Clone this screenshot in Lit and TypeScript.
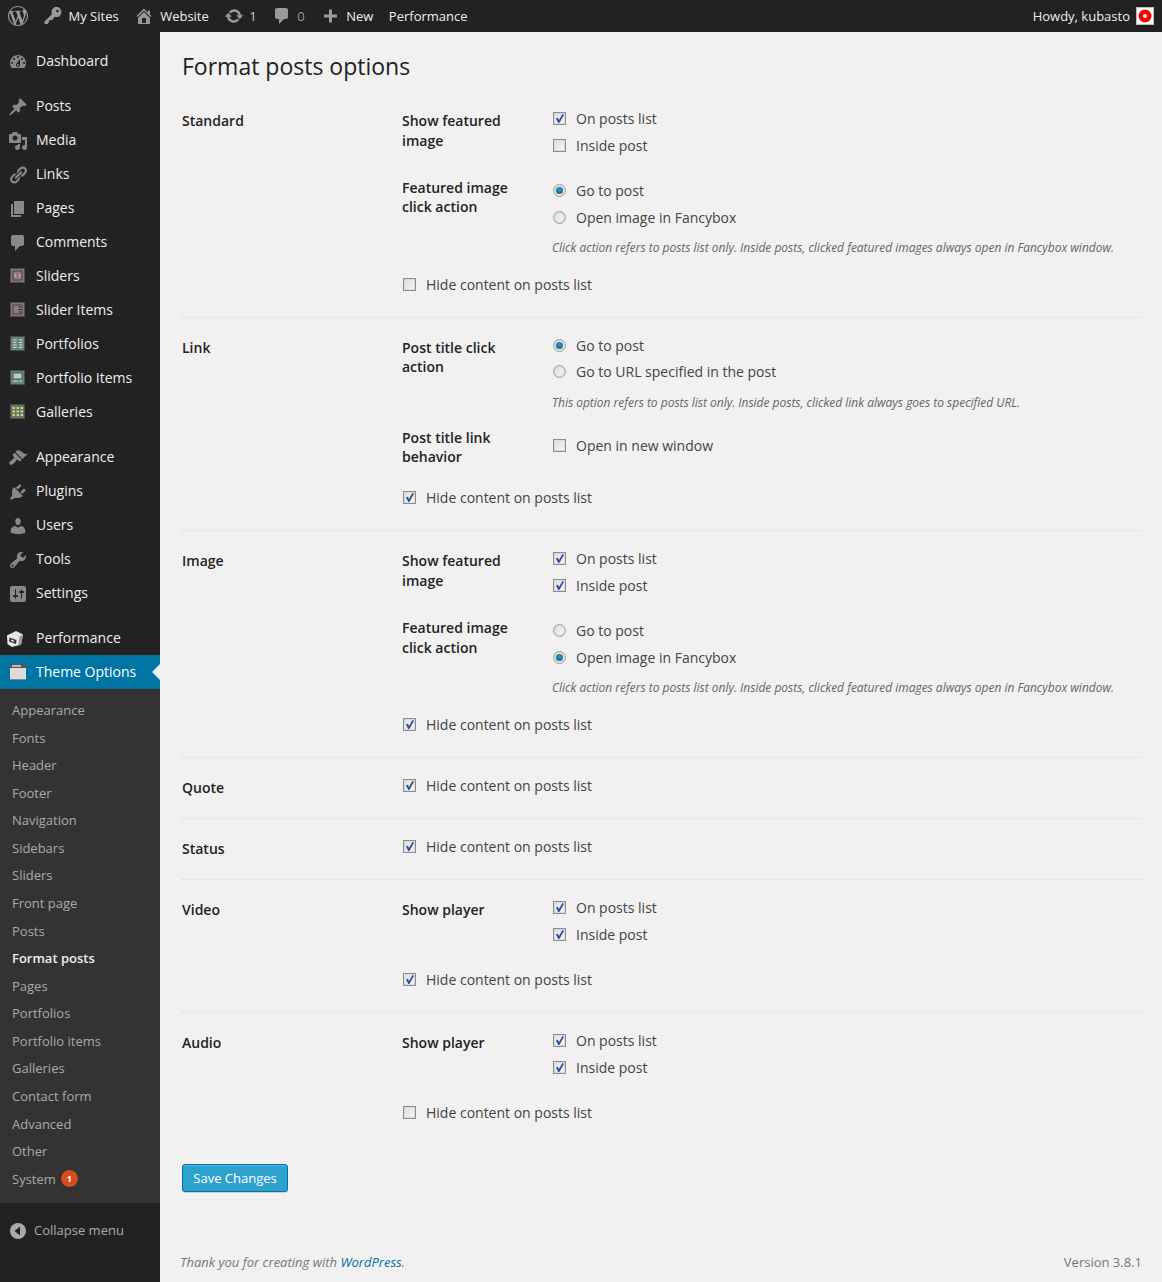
import { LitElement, html, css, svg } from "lit";
import { customElement } from "lit/decorators.js";

const P = {
  wp: "M20 10c0-5.51-4.49-10-10-10C4.48 0 0 4.49 0 10c0 5.52 4.48 10 10 10 5.51 0 10-4.48 10-10zM7.78 15.37L4.37 6.22c.55-.02 1.17-.08 1.17-.08.5-.06.44-1.13-.06-1.11 0 0-1.45.11-2.37.11-.18 0-.37 0-.58-.01C4.12 2.69 6.87 1.11 10 1.11c2.33 0 4.45.87 6.05 2.34-.68-.11-1.65.39-1.65 1.58 0 .74.45 1.36.9 2.1.35.61.55 1.36.55 2.46 0 1.49-1.4 5-1.4 5l-3.03-8.37c.54-.02.82-.17.82-.17.5-.05.44-1.25-.06-1.22 0 0-1.44.12-2.38.12-.87 0-2.33-.12-2.33-.12-.5-.03-.56 1.2-.06 1.22l.92.08 1.26 3.41zM17.41 10c.24-.64.74-1.87.43-4.25.7 1.29 1.05 2.71 1.05 4.25 0 3.29-1.73 6.24-4.4 7.78.97-2.59 1.94-5.2 2.92-7.78zM6.1 18.09C3.12 16.65 1.11 13.53 1.11 10c0-1.3.23-2.48.72-3.59C3.25 10.3 4.67 14.2 6.1 18.09zm4.03-6.63l2.58 6.98c-.86.29-1.76.45-2.71.45-.79 0-1.57-.11-2.29-.33.81-2.38 1.62-4.74 2.42-7.1z",
  key: "M16.95 2.58c1.96 1.95 1.96 5.12 0 7.07-1.51 1.51-3.75 1.84-5.59 1.01l-1.87 3.31-2.99.31L5 18H2l-1-2 7.95-7.69c-.92-1.87-.62-4.18.93-5.73 1.95-1.96 5.12-1.96 7.07 0zm-2.51 3.79c.74 0 1.33-.6 1.33-1.34 0-.73-.59-1.33-1.33-1.33-.73 0-1.33.6-1.33 1.33 0 .74.6 1.34 1.33 1.34z",
  home: "M16 8.5l1.53 1.53-1.06 1.06L10 4.62l-6.47 6.47-1.06-1.06L10 2.5l4 4v-2h2v4zm-6-2.46l6 5.99V18H4v-5.97zM12 17v-5H8v5h4z",
  updates: "M10.2 3.28c3.53 0 6.43 2.61 6.92 6h2.08l-3.5 4-3.5-4h2.32c-.45-1.97-2.21-3.44-4.32-3.44-1.45 0-2.73.71-3.54 1.78L4.95 5.66C6.23 4.2 8.11 3.28 10.2 3.28zm-.4 13.44c-3.52 0-6.43-2.61-6.92-6H.8l3.5-4c1.17 1.33 2.33 2.67 3.5 4H5.48c.45 1.97 2.21 3.44 4.32 3.44 1.45 0 2.73-.71 3.54-1.78l1.71 1.95c-1.28 1.46-3.15 2.39-5.25 2.39z",
  comment: "M5 2h9c1.1 0 2 .9 2 2v7c0 1.1-.9 2-2 2h-2l-5 5v-5H5c-1.1 0-2-.9-2-2V4c0-1.1.9-2 2-2z",
  plus: "M17 8.500v3h-5v5H9v-5H4v-3h5v-5h3v5h5z",
  dashboard: "M3.76 16h12.48c1.1-1.37 1.76-3.11 1.76-5 0-4.42-3.58-8-8-8s-8 3.58-8 8c0 1.89.66 3.63 1.76 5zM10 4c.55 0 1 .45 1 1s-.45 1-1 1-1-.45-1-1 .45-1 1-1zM6 6c.55 0 1 .45 1 1s-.45 1-1 1-1-.45-1-1 .45-1 1-1zm8 0c.55 0 1 .45 1 1s-.45 1-1 1-1-.45-1-1 .45-1 1-1zm-5.37 5.55L12 7v6c0 1.1-.9 2-2 2s-2-.9-2-2c0-.57.24-1.08.63-1.45zM4 10c.55 0 1 .45 1 1s-.45 1-1 1-1-.45-1-1 .45-1 1-1zm12 0c.55 0 1 .45 1 1s-.45 1-1 1-1-.45-1-1 .45-1 1-1zm-5 3c0-.55-.45-1-1-1s-1 .45-1 1 .45 1 1 1 1-.45 1-1z",
  post: "M10.44 3.02l1.82-1.82 6.36 6.35-1.83 1.82c-1.05-.68-2.48-.57-3.41.36l-.75.75c-.92.93-1.04 2.35-.35 3.41l-1.83 1.82-2.41-2.41-2.8 2.79c-.42.42-3.38 2.71-3.8 2.29s1.86-3.39 2.28-3.81l2.79-2.79L4.1 9.36l1.83-1.82c1.05.69 2.48.57 3.4-.36l.75-.75c.93-.92 1.05-2.35.36-3.41z",
  media: "M13 11V4c0-.55-.45-1-1-1h-1.67L9 1H5L3.67 3H2c-.55 0-1 .45-1 1v7c0 .55.45 1 1 1h10c.55 0 1-.45 1-1zM7 4.5c1.38 0 2.5 1.12 2.5 2.5S8.38 9.5 7 9.5 4.5 8.38 4.5 7 5.62 4.5 7 4.5zM14 6h5v10.5c0 1.38-1.12 2.5-2.5 2.5S14 17.88 14 16.5s1.12-2.5 2.5-2.5c.17 0 .34.02.5.05V9h-3V6zm-4 8.05V13h2v3.5c0 1.38-1.12 2.5-2.5 2.5S7 17.88 7 16.5 8.12 14 9.5 14c.17 0 .34.02.5.05z",
  links: "M17.74 2.76c1.68 1.69 1.68 4.41 0 6.1l-1.53 1.52c-1.12 1.12-2.7 1.49-4.14 1.09l2.62-2.61.76-.77.76-.76c.84-.84.84-2.2 0-3.04-.84-.85-2.2-.85-3.04 0l-.77.76-3.38 3.38c-.37-1.44-.02-3.02 1.1-4.14l1.52-1.53c1.69-1.68 4.42-1.68 6.1 0zM8.59 13.43l5.34-5.34c.42-.42.42-1.1 0-1.52-.44-.43-1.13-.39-1.53 0l-5.33 5.34c-.42.42-.42 1.1 0 1.52.44.43 1.13.39 1.52 0zm-.76 2.29l4.14-4.15c.38 1.44.03 3.02-1.09 4.14l-1.52 1.53c-1.69 1.68-4.41 1.68-6.1 0-1.68-1.68-1.68-4.42 0-6.1l1.53-1.52c1.12-1.12 2.7-1.47 4.14-1.1l-4.14 4.15c-.85.84-.85 2.2 0 3.05.84.84 2.2.84 3.04 0z",
  page: "M6 15V2h10v13H6zm-1 1h8v2H3V5h2v11z",
  appearance: "M14.48 11.06L7.41 3.99l1.5-1.5c.5-.56 2.3-.47 3.51.32 1.21.8 1.43 1.28 2.91 2.1 1.18.64 2.45 1.26 4.45.85zm-.71.71L6.7 4.7 4.93 6.47c-.39.39-.39 1.02 0 1.41l1.06 1.06c.39.39.39 1.03 0 1.42-.6.6-1.43 1.11-2.21 1.69-.35.26-.7.53-1.01.84C1.43 13.23.75 15.36 1.7 16.3c.94.95 3.08.26 4.42-1.07.32-.31.59-.66.84-1.01.59-.79 1.12-1.59 1.7-2.2.39-.39 1.03-.39 1.41 0l1.06 1.06c.39.39 1.02.39 1.41 0z",
  plugins: "M13.11 4.36L9.87 7.6 8 5.73l3.24-3.24c.35-.34 1.05-.2 1.56.32.52.51.66 1.21.31 1.55zm-8 1.77l.91-1.12 9.01 9.01-1.19.84c-.71.71-2.63 1.16-3.82 1.16H6.14L4.9 17.26c-.59.59-1.54.59-2.12 0-.59-.58-.59-1.53 0-2.12l1.24-1.24v-3.88c0-1.13.4-3.19 1.09-3.89zm7.26 3.97l3.24-3.24c.34-.35 1.04-.21 1.55.31.52.51.66 1.21.31 1.55l-3.24 3.25z",
  users: "M10 9.25c-2.27 0-2.73-3.44-2.73-3.44C7 4.02 7.82 2 9.97 2c2.16 0 2.98 2.02 2.71 3.81 0 0-.41 3.44-2.68 3.44zm0 2.57L12.72 10c2.39 0 4.52 2.33 4.52 4.53v2.49s-3.65 1.13-7.24 1.13c-3.65 0-7.24-1.13-7.24-1.13v-2.49c0-2.25 1.94-4.48 4.47-4.48z",
  tools: "M16.68 9.77c-1.34 1.34-3.3 1.67-4.95.99l-5.41 6.52c-.99.99-2.59.99-3.58 0s-.99-2.59 0-3.57l6.52-5.42c-.68-1.65-.35-3.61.99-4.95 1.28-1.28 3.12-1.62 4.72-1.06l-2.89 2.89 2.82 2.82 2.86-2.87c.53 1.58.18 3.39-1.08 4.65zM3.81 16.21c.4.39 1.04.39 1.43 0 .4-.4.4-1.04 0-1.43-.39-.4-1.03-.4-1.43 0-.39.39-.39 1.03 0 1.43z",
  settings: "M18 16V4c0-1.1-.9-2-2-2H4c-1.1 0-2 .9-2 2v12c0 1.1.9 2 2 2h12c1.1 0 2-.9 2-2zM8 11h1c.55 0 1 .45 1 1s-.45 1-1 1H8v1.5c0 .28-.22.5-.5.5s-.5-.22-.5-.5V13H6c-.55 0-1-.45-1-1s.45-1 1-1h1V5.5c0-.28.22-.5.5-.5s.5.22.5.5V11zm5-2h-1c-.55 0-1-.45-1-1s.45-1 1-1h1V5.5c0-.28.22-.5.5-.5s.5.22.5.5V7h1c.55 0 1 .45 1 1s-.45 1-1 1h-1v5.5c0 .28-.22.5-.5.5s-.5-.22-.5-.5V9z",
};

const ic = (d: string) => html`<svg class="ic" viewBox="0 0 20 20"><path d=${d}></path></svg>`;

const tile = (fill: string, inner: unknown) => html`<svg class="tile" viewBox="0 0 20 20">
  <rect x="2" y="1" width="15" height="15" fill="#4c4c4c"></rect>
  <rect x="3" y="2" width="13" height="13" fill=${fill}></rect>${inner}</svg>`;

const T = {
  sliders: tile("#8a7676", svg`<rect x="5" y="4" width="9" height="9" fill="#8f7a7a" stroke="#2f2a2a" stroke-width=".7"></rect><path d="M8 7l-1.3 1.500L8 10M11 7l1.300 1.500L11 10" stroke="#ddd" stroke-width=".8" fill="none"></path>`),
  sliderItems: tile("#8a7676", svg`<rect x="5" y="4" width="9" height="9" fill="#8f7a7a" stroke="#2f2a2a" stroke-width=".7"></rect><path d="M10.500 6h2.500M10.500 8.500h2.500M10.500 11h2.500" stroke="#2f2a2a" stroke-width="1"></path>`),
  portfolios: tile("#66857c", svg`<path d="M5 5h3.500M11 5h3.500M5 7.500h3.500M11 7.500h3.500M5 10h3.500M11 10h3.500M5 12.500h3.500M11 12.500h3.500" stroke="#cfdcd8" stroke-width="1.200"></path>`),
  portfolioItems: tile("#66857c", svg`<rect x="5" y="4" width="9" height="6" fill="#b6cbc5" stroke="#2c3a36" stroke-width=".7"></rect><path d="M5 12h5M11 12h3" stroke="#cfdcd8" stroke-width="1"></path>`),
  galleries: tile("#65794c", svg`<path d="M4.500 5h2.500M8.500 5h2.500M12.500 5h2.500M4.500 8.500h2.500M8.500 8.500h2.500M12.500 8.500h2.500M4.500 12h2.500M8.500 12h2.500M12.500 12h2.500" stroke="#c0cca8" stroke-width="2"></path>`),
};

const perf = html`<svg class="tile shift" viewBox="0 0 20 20">
  <path d="M2 6.500L11 2l7 3.500-2 10L7 18l-4.500-3z" fill="#e8e8e8"></path>
  <path d="M14.500 7.500L18 5.500l-2 10-3 1.500z" fill="#9a9a9a"></path>
  <path d="M4.500 8.500l7 2.500-.5 4-7-2.500z" fill="#333"></path>
  <path d="M6 10.500l3 1v1.500l-3-1z" fill="#eee"></path></svg>`;

const themeIcon = html`<svg class="tile" viewBox="0 0 20 20">
  <rect x="2" y="1" width="16" height="16" fill="#dcdcdc"></rect>
  <rect x="2" y="1" width="16" height="4" fill="#555"></rect>
  <rect x="4" y="2" width="9" height="2" fill="#bbb"></rect>
  <rect x="2" y="16" width="16" height="1" fill="#888"></rect></svg>`;

type MenuItem = { label: string; icon: unknown; gap?: boolean };

const MENU: MenuItem[] = [
  { label: "Dashboard", icon: ic(P.dashboard) },
  { label: "Posts", icon: ic(P.post), gap: true },
  { label: "Media", icon: ic(P.media) },
  { label: "Links", icon: ic(P.links) },
  { label: "Pages", icon: ic(P.page) },
  { label: "Comments", icon: ic(P.comment) },
  { label: "Sliders", icon: T.sliders },
  { label: "Slider Items", icon: T.sliderItems },
  { label: "Portfolios", icon: T.portfolios },
  { label: "Portfolio Items", icon: T.portfolioItems },
  { label: "Galleries", icon: T.galleries },
  { label: "Appearance", icon: ic(P.appearance), gap: true },
  { label: "Plugins", icon: ic(P.plugins) },
  { label: "Users", icon: ic(P.users) },
  { label: "Tools", icon: ic(P.tools) },
  { label: "Settings", icon: ic(P.settings) },
  { label: "Performance", icon: perf, gap: true },
];

const SUB = ["Appearance", "Fonts", "Header", "Footer", "Navigation", "Sidebars", "Sliders", "Front page", "Posts", "Format posts", "Pages", "Portfolios", "Portfolio items", "Galleries", "Contact form", "Advanced", "Other"];

type Opt = [string, boolean];
type Group = { label: string; type: "checkbox" | "radio"; opts: Opt[]; hint?: string; tight?: boolean; sub?: boolean; wide?: boolean; short?: boolean };
type Section = { name: string; groups: Group[]; hide: boolean };

const HINT = "Click action refers to posts list only. Inside posts, clicked featured images always open in Fancybox window.";

const SECTIONS: Section[] = [
  { name: "Standard", hide: false, groups: [
    { label: "Show featured image", type: "checkbox", opts: [["On posts list", true], ["Inside post", false]] },
    { label: "Featured image click action", type: "radio", sub: true, short: true, opts: [["Go to post", true], ["Open image in Fancybox", false]], hint: HINT },
  ] },
  { name: "Link", hide: true, groups: [
    { label: "Post title click action", type: "radio", tight: true, short: true, opts: [["Go to post", true], ["Go to URL specified in the post", false]], hint: "This option refers to posts list only. Inside posts, clicked link always goes to specified URL." },
    { label: "Post title link behavior", type: "checkbox", sub: true, wide: true, short: true, opts: [["Open in new window", false]] },
  ] },
  { name: "Image", hide: true, groups: [
    { label: "Show featured image", type: "checkbox", opts: [["On posts list", true], ["Inside post", true]] },
    { label: "Featured image click action", type: "radio", sub: true, opts: [["Go to post", false], ["Open image in Fancybox", true]], hint: HINT },
  ] },
  { name: "Quote", hide: true, groups: [] },
  { name: "Status", hide: true, groups: [] },
  { name: "Video", hide: true, groups: [
    { label: "Show player", type: "checkbox", opts: [["On posts list", true], ["Inside post", true]] },
  ] },
  { name: "Audio", hide: false, groups: [
    { label: "Show player", type: "checkbox", opts: [["On posts list", true], ["Inside post", true]] },
  ] },
];

@customElement("app-root")
export class AppRoot extends LitElement {
  static styles = css`
    :host { display: block; width: 1162px; min-height: 1282px; background: #f1f1f1; font-family: "Open Sans", sans-serif; font-size: 14px; color: #444; }
    * { box-sizing: border-box; }
    .bar { height: 32px; background: #222; color: #eee; font-size: 13px; display: flex; align-items: center; gap: 15.5px; padding: 0 8px; }
    .bar .ic { width: 20px; height: 20px; fill: #999; flex: none; display: block; }
    .bar-item { display: flex; align-items: center; gap: 7px; white-space: nowrap; }
    .g5 { gap: 5px; }
    .g6 { gap: 6px; }
    .tightl { margin-left: -1px; }
    .dim { color: #999; }
    .lite { color: #ccc; }
    .howdy { margin-left: auto; display: flex; align-items: center; gap: 6px; }
    .avatar { width: 18px; height: 18px; display: block; }
    .wrap { display: flex; min-height: 1250px; }
    .side { width: 160px; flex: none; background: #222; padding-top: 12px; display: flex; flex-direction: column; }
    .mi { height: 34px; display: flex; align-items: center; padding-left: 8px; color: #eee; position: relative; }
    .mi.gap { margin-top: 11px; }
    .mi .ic { width: 20px; height: 20px; fill: #888; flex: none; margin-top: 2px; }
    .mi .tile { width: 20px; height: 20px; flex: none; margin-top: 2px; }
    .mi .tile.shift { transform: translateX(-3px); }
    .mi span { margin-left: 8px; white-space: nowrap; margin-bottom: 2px; }
    .mi.cur { background: #0074a2; color: #fff; }
    .mi.cur::after { content: ""; position: absolute; right: 0; top: 9px; border: 8px solid transparent; border-right-color: #f1f1f1; border-left-width: 0; }
    .sub { background: #333; padding: 7.15px 0 10.23px 12px; }
    .sub div { height: 27.59px; display: flex; align-items: center; font-size: 13px; color: #aaa; white-space: nowrap; }
    .sub .on { color: #eee; font-weight: 600; }
    .sub .badge { margin-left: 5px; width: 17px; height: 17px; border-radius: 50%; background: #d54e21; color: #fff; font-size: 9px; font-weight: 700; display: flex; align-items: center; justify-content: center; }
    .collapse { display: flex; align-items: center; padding: 0 0 0 10px; margin-top: 18px; height: 20px; color: #aaa; font-size: 13px; gap: 8px; }
    .collapse svg { width: 16px; height: 16px; display: block; }
    .collapse span { margin-bottom: 2px; }
    .main { flex: 1; min-width: 0; padding: 0 20px 0 22px; display: flex; flex-direction: column; }
    h2 { margin: 0 0 10px; padding-top: 20px; font-size: 23px; font-weight: 400; line-height: 29px; color: #222; }
    .section { display: grid; grid-template-columns: 220px 1fr; padding: 15px 0 18px; border-top: 1px dotted #dcdcdc; }
    .section:first-of-type { border-top: 0; }
    .name { padding-top: 5px; font-weight: 600; line-height: 19.6px; color: #222; }
    .group { display: grid; grid-template-columns: 151px 1fr; margin-bottom: 18px; }
    .group.has-hint { margin-bottom: 16px; }
    .glabel { padding-top: 5px; padding-right: 40px; font-weight: 600; line-height: 19.6px; color: #222; }
    .group.short .glabel { line-height: 19px; }
    .group.sub-g .glabel { padding-top: 0; }
    .group.wide { min-height: 40px; align-items: center; }
    .group.wide .row { margin-top: -2px; }
    .hint { grid-column: 2; margin: 8px 0 0 -1px; height: 16px; line-height: 16px; font-size: 12px; font-style: italic; color: #666; white-space: nowrap; letter-spacing: -0.012px; }
    .group.tight .hint { margin-top: 10px; }
    .row { height: 27px; display: flex; align-items: center; gap: 10px; white-space: nowrap; color: #444; padding-bottom: 2px; }
    .row.hide { padding-left: 1px; }
    .group.tight .row { height: 26px; }
    input { appearance: none; -webkit-appearance: none; margin: 0; flex: none; width: 13px; height: 13px; background: linear-gradient(135deg, #dedede, #f6f6f6); border: 1px solid #8c8c8c; box-shadow: inset 0 0 0 1px #dadada; position: relative; top: 0; display: block; }
    input[type="radio"] { border-radius: 50%; border-color: #a3a3a3; box-shadow: inset 0 0 0 1px #d5d5d5; }
    input[type="checkbox"]:checked::before { content: ""; position: absolute; left: 2px; top: 1px; width: 8px; height: 9px; background: #2a4f9e; clip-path: polygon(0 50%, 22% 42%, 38% 66%, 80% 0, 100% 8%, 42% 100%, 28% 100%); }
    input[type="radio"]:checked::before { content: ""; position: absolute; left: 2px; top: 2px; width: 7px; height: 7px; border-radius: 50%; background: radial-gradient(circle at 50% 40%, #2ea2cc, #0f4d72); }
    .save { margin-top: 19px; align-self: flex-start; height: 28px; width: 106px; padding: 0; border: 1px solid #0074a2; border-radius: 3px; background: #2ea2cc; color: #fff; font: 13px "Open Sans", sans-serif; box-shadow: inset 0 1px 0 rgba(120,200,230,.5), 0 1px 0 rgba(0,0,0,.15); }
    .foot { margin-top: auto; margin-left: -2px; padding-bottom: 10px; display: flex; justify-content: space-between; font-size: 13px; line-height: 20px; color: #777; }
    .foot em { font-style: italic; }
    .foot a { color: #0074a2; text-decoration: none; }
  `;

  private group(sec: string, g: Group) {
    const cls = ["group", g.tight ? "tight" : "", g.sub ? "sub-g" : "", g.hint ? "has-hint" : "", g.wide ? "wide" : "", g.short ? "short" : ""].join(" ");
    return html`<div class=${cls}>
      <div class="glabel">${g.label}</div>
      <div>${g.opts.map(([t, c]) => html`<label class="row"><input type=${g.type} ?checked=${c} name=${sec + g.label} />${t}</label>`)}</div>
      ${g.hint ? html`<div class="hint">${g.hint}</div>` : ""}
    </div>`;
  }

  render() {
    return html`
      <div class="bar">
        <div class="bar-item">${ic(P.wp)}</div>
        <div class="bar-item g6 tightl">${ic(P.key)}My Sites</div>
        <div class="bar-item g6">${ic(P.home)}Website</div>
        <div class="bar-item g5">${ic(P.updates)}<span class="lite">1</span></div>
        <div class="bar-item g5">${ic(P.comment)}<span class="dim">0</span></div>
        <div class="bar-item g6">${ic(P.plus)}New</div>
        <div class="bar-item">Performance</div>
        <div class="bar-item howdy">Howdy, kubasto
          <svg class="avatar" viewBox="0 0 18 18"><rect width="18" height="18" fill="#bbb"></rect><rect x="1" y="1" width="16" height="16" fill="#fff"></rect><circle cx="9" cy="9" r="6.500" fill="#f00"></circle><circle cx="9" cy="9" r="2" fill="#fff"></circle></svg>
        </div>
      </div>
      <div class="wrap">
        <nav class="side">
          ${MENU.map((m) => html`<div class="mi ${m.gap ? "gap" : ""}">${m.icon}<span>${m.label}</span></div>`)}
          <div class="mi cur">${themeIcon}<span>Theme Options</span></div>
          <div class="sub">
            ${SUB.map((s) => html`<div class=${s === "Format posts" ? "on" : ""}>${s}</div>`)}
            <div>System<span class="badge">1</span></div>
          </div>
          <div class="collapse">
            <svg viewBox="0 0 16 16"><circle cx="8" cy="8" r="8" fill="#aaa"></circle><path d="M10 3.500v9L4.500 8z" fill="#222"></path></svg>
            <span>Collapse menu</span>
          </div>
        </nav>
        <main class="main">
          <h2>Format posts options</h2>
          ${SECTIONS.map((s) => html`<section class="section">
            <div class="name">${s.name}</div>
            <div>
              ${s.groups.map((g) => this.group(s.name, g))}
              <label class="row hide"><input type="checkbox" ?checked=${s.hide} />Hide content on posts list</label>
            </div>
          </section>`)}
          <button class="save">Save Changes</button>
          <footer class="foot">
            <em>Thank you for creating with <a href="#">WordPress</a>.</em>
            <span>Version 3.8.1</span>
          </footer>
        </main>
      </div>
    `;
  }
}
